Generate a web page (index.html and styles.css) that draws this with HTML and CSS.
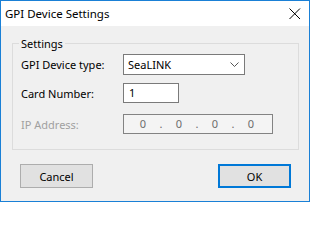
FILE: index.html
```html
<!DOCTYPE html>
<html>
<head>
<meta charset="utf-8">
<title>GPI Device Settings</title>
<link rel="stylesheet" href="styles.css">
</head>
<body>
<div class="window">
  <div class="titlebar">
    <span class="title">GPI Device Settings</span>
    <svg class="close" width="12" height="12" viewBox="0 0 12 12"><path d="M0.5 0.5 L11 11 M11 0.5 L0.5 11" stroke="#000" stroke-width="1" fill="none"/></svg>
  </div>
  <div class="client">
    <fieldset class="group">
      <legend class="legend">Settings</legend>
      <div class="row row-type">
        <span class="label">GPI Device type:</span>
        <div class="combo">
          <span class="combo-text">SeaLINK</span>
          <svg class="chevron" width="9" height="5" viewBox="0 0 9 5"><path d="M0.5 0.5 L4.5 4.5 L8.5 0.5" stroke="#555" stroke-width="1" fill="none"/></svg>
        </div>
      </div>
      <div class="row row-card">
        <span class="label">Card Number:</span>
        <div class="edit">1</div>
      </div>
      <div class="row row-ip">
        <span class="label disabled">IP Address:</span>
        <div class="ip">
          <span class="oct">0</span><span class="dot">.</span><span class="oct">0</span><span class="dot">.</span><span class="oct">0</span><span class="dot">.</span><span class="oct">0</span>
        </div>
      </div>
    </fieldset>
    <div class="buttons">
      <div class="btn">Cancel</div>
      <div class="btn btn-default">OK</div>
    </div>
  </div>
</div>
</body>
</html>
```

FILE: styles.css
```css
html, body {
  margin: 0;
  padding: 0;
  background: #ffffff;
}
body {
  font-family: "Noto Sans", "Open Sans", sans-serif;
  font-size: 11px;
  color: #000;
}
.window {
  width: 310px;
  height: 202px;
  box-sizing: border-box;
  border: 1px solid #1a80d6;
  display: flex;
  flex-direction: column;
}
.titlebar {
  height: 25px;
  background: #ffffff;
  display: flex;
  align-items: center;
  justify-content: space-between;
  padding: 0 8px 0 4px;
}
.title {
  font-size: 11.5px;
  line-height: 15px;
}
.close {
  display: block;
  margin-top: 1px;
}
.client {
  flex: 1;
  background: #f0f0f0;
  padding: 10px 10px 0 11px;
  display: flex;
  flex-direction: column;
}
.group {
  margin: 0;
  border: 1px solid #dcdcdc;
  padding: 3px 0 15px 8px;
  min-width: 0;
}
.legend {
  padding: 0 2px;
  margin-left: -2px;
  line-height: 15px;
}
.row {
  display: flex;
  align-items: center;
}
.row-card { margin-top: 8px; }
.row-ip { margin-top: 11px; }
.label {
  width: 102px;
  flex: none;
}
.disabled { color: #a0a0a0; }
.combo {
  width: 122px;
  height: 21px;
  box-sizing: border-box;
  border: 1px solid #7a7a7a;
  background: #fff;
  display: flex;
  align-items: center;
  justify-content: space-between;
  padding: 0 5px 0 4px;
}
.chevron { display: block; }
.edit {
  width: 56px;
  height: 20px;
  box-sizing: border-box;
  border: 1px solid #7a7a7a;
  background: #fff;
  padding-left: 5px;
  line-height: 18px;
}
.ip {
  width: 150px;
  height: 20px;
  box-sizing: border-box;
  border: 1px solid #838383;
  background: #f4f4f4;
  display: flex;
  padding-left: 5px;
  line-height: 18px;
  color: #6d6d6d;
}
.oct {
  width: 28px;
  text-align: center;
}
.dot {
  width: 8px;
  text-align: center;
}
.buttons {
  display: flex;
  justify-content: space-between;
  margin-top: 14px;
  padding: 0 8px 0 8px;
}
.btn {
  width: 73px;
  height: 24px;
  box-sizing: border-box;
  border: 1px solid #adadad;
  background: #e1e1e1;
  display: flex;
  align-items: center;
  justify-content: center;
}
.btn-default {
  border: 2px solid #0078d7;
}
```
